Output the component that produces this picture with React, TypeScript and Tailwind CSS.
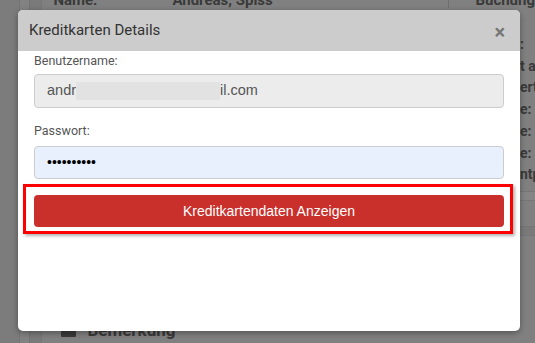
export default function App() {
  return (
    <div className="relative h-[343px] w-[535px] overflow-hidden bg-[#808080] font-['Roboto',sans-serif]">
      {/* dimmed page behind the dialog */}
      <div className="flex h-full">
        <div className="w-[22px] border-r border-[#747474] bg-[#7c7c7c]" />
        <div className="w-[11px] border-r border-[#747474] bg-[#828282]" />
        <div className="w-[14px] border-r border-[#777777] bg-[#7a7a7a]" />
        <div className="flex flex-1 flex-col">
          <div className="flex h-[8px] items-end overflow-hidden text-[15px] font-bold leading-none text-[#3a3a3a]">
            <span className="ml-[11px] w-[119px] shrink-0">Name:</span>
            <span className="w-[276px] shrink-0">Andreas, Spiss</span>
            <span className="h-full border-l border-[#6f6f6f]" />
            <span className="ml-[26px]">Buchung</span>
          </div>
          <div className="flex flex-1">
            <div className="flex-1" />
            <div className="flex w-[15px] flex-col pt-[26px] text-[14px] font-bold leading-[21.7px] text-[#3a3a3a]">
              <span>:</span>
              <span className="whitespace-nowrap">t an</span>
              <span className="whitespace-nowrap">ert</span>
              <span>e:</span>
              <span>e:</span>
              <span>e:</span>
              <span className="whitespace-nowrap">ntp</span>
              <div className="-ml-[10px] mt-[5px] h-[10px] border-y border-[#767676] bg-[#858585]" />
              <div className="-ml-[10px] mt-[25px] h-[10px] border-y border-[#767676] bg-[#7a7a7a]" />
            </div>
          </div>
          <div className="flex h-[24px] items-center gap-[11px] pl-[19px] text-[17px] font-bold text-[#3a3a3a]">
            <span className="h-[12px] w-[15px] rounded-[1px] bg-[#3a3a3a]" />
            <span>Bemerkung</span>
          </div>
        </div>
      </div>

      {/* modal */}
      <div className="absolute left-[18px] top-[10px] flex h-[321px] w-[502px] flex-col rounded-[5px] bg-white shadow-[0_2px_6px_rgba(0,0,0,0.35)]">
        <div className="flex h-[41px] items-center justify-between rounded-t-[5px] bg-[#cccccc] pl-[11px] pr-[15px]">
          <span className="text-[15px] text-[#333333]">Kreditkarten Details</span>
          <span className="mt-[2px] text-[20px] font-bold leading-none text-[#757575]">×</span>
        </div>
        <div className="flex flex-col px-[16px]">
          <label className="mt-[2px] text-[12.5px] leading-[16px] text-[#555555]">Benutzername:</label>
          <div className="mt-[5px] flex h-[34px] items-center rounded-[4px] border border-[#cccccc] bg-[#ececec] pl-[12px] font-['Liberation_Sans',Arial,sans-serif] text-[14.5px] text-[#555555]">
            <span>andr</span>
            <span className="h-[18px] w-[144px] bg-[#e2e2e2]" />
            <span>il.com</span>
          </div>
          <label className="mt-[15px] text-[12.5px] leading-[16px] text-[#555555]">Passwort:</label>
          <div className="mt-[7px] flex h-[33px] items-center rounded-[4px] border border-[#cccccc] bg-[#e8f0fe] pl-[12px] font-['Liberation_Sans',Arial,sans-serif] text-[14px] text-black">
            ••••••••••
          </div>
          <div className="relative mt-[16px]">
            <button className="flex h-[32px] w-full items-center justify-center rounded-[4px] bg-[#c9302c] font-['Liberation_Sans',Arial,sans-serif] text-[14px] text-white">
              Kreditkartendaten Anzeigen
            </button>
            <span className="pointer-events-none absolute -bottom-[7px] -left-[11px] -right-[9px] -top-[11px] border-[3px] border-[#ff0000] shadow-[2px_2px_3px_rgba(0,0,0,0.3)]" />
          </div>
        </div>
      </div>
    </div>
  );
}
